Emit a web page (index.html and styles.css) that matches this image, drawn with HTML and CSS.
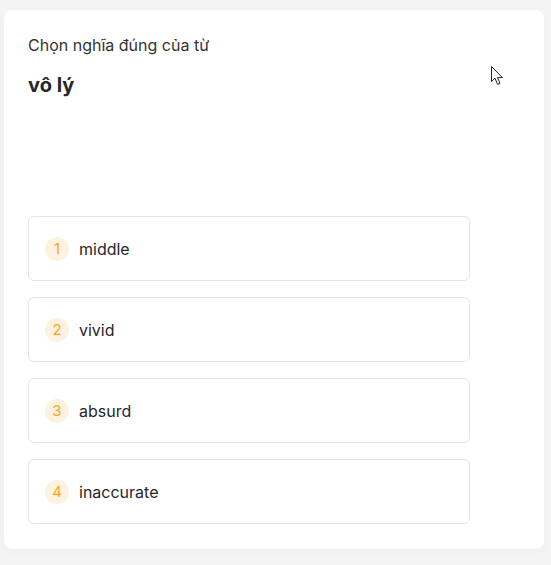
FILE: index.html
```html
<!DOCTYPE html>
<html lang="vi">

<head>
    <meta charset="UTF-8">
    <meta name="viewport" content="width=device-width, initial-scale=1.0">
    <title>Chọn nghĩa đúng</title>
    <link rel="stylesheet" href="styles.css">
</head>

<body>
    <div class="card">
        <p class="prompt">Chọn nghĩa đúng của từ</p>
        <h2 class="word">vô lý</h2>

        <ul class="options">
            <li class="option"><span class="num">1</span><span class="label">middle</span></li>
            <li class="option"><span class="num">2</span><span class="label">vivid</span></li>
            <li class="option"><span class="num">3</span><span class="label">absurd</span></li>
            <li class="option"><span class="num">4</span><span class="label">inaccurate</span></li>
        </ul>

        <!-- mouse pointer -->
        <svg class="pointer" width="13" height="20" viewBox="0 0 13 20">
            <path d="M0.5 0.5 L0.5 15.5 L4 12.2 L6.6 18.4 L9 17.4 L6.5 11.6 L11.5 11.6 Z" fill="#fff" stroke="#222" stroke-width="1" stroke-linejoin="miter"/>
        </svg>
    </div>
</body>

</html>
```

FILE: styles.css
```css
/* Basic Reset */
html,
body {
    margin: 0;
    padding: 0;
    background-color: #f4f4f5;
    font-family: Inter, 'Noto Sans', sans-serif;
    color: #27272a;
}

body {
    padding: 10px 7px 16px 4px;
}

/* Card */
.card {
    position: relative;
    background: #ffffff;
    border-radius: 8px;
    padding: 23px 24px 24px;
    box-shadow: 0 2px 8px rgba(0, 0, 0, 0.03);
    height: 539px;
    box-sizing: border-box;
}

.prompt {
    margin: 0;
    font-size: 16px;
    line-height: 24px;
    color: #333333;
}

.word {
    margin: 14px 0 0;
    font-size: 20px;
    line-height: 28px;
    font-weight: 700;
    color: #27272a;
}

/* Answer list */
.options {
    list-style: none;
    margin: 117px 0 0;
    padding: 0;
    display: flex;
    flex-direction: column;
    gap: 16px;
    width: 442px;
}

.option {
    display: flex;
    align-items: center;
    gap: 10px;
    height: 65px;
    box-sizing: border-box;
    padding: 0 16px;
    border: 1px solid #e4e4e7;
    border-radius: 6px;
}

.num {
    width: 24px;
    height: 24px;
    border-radius: 50%;
    background-color: #fdf2e0;
    color: #f5a623;
    font-size: 15px;
    display: flex;
    align-items: center;
    justify-content: center;
}

.label {
    font-size: 16px;
    color: #27272a;
}

.pointer {
    position: absolute;
    left: 487px;
    top: 56px;
}
```
